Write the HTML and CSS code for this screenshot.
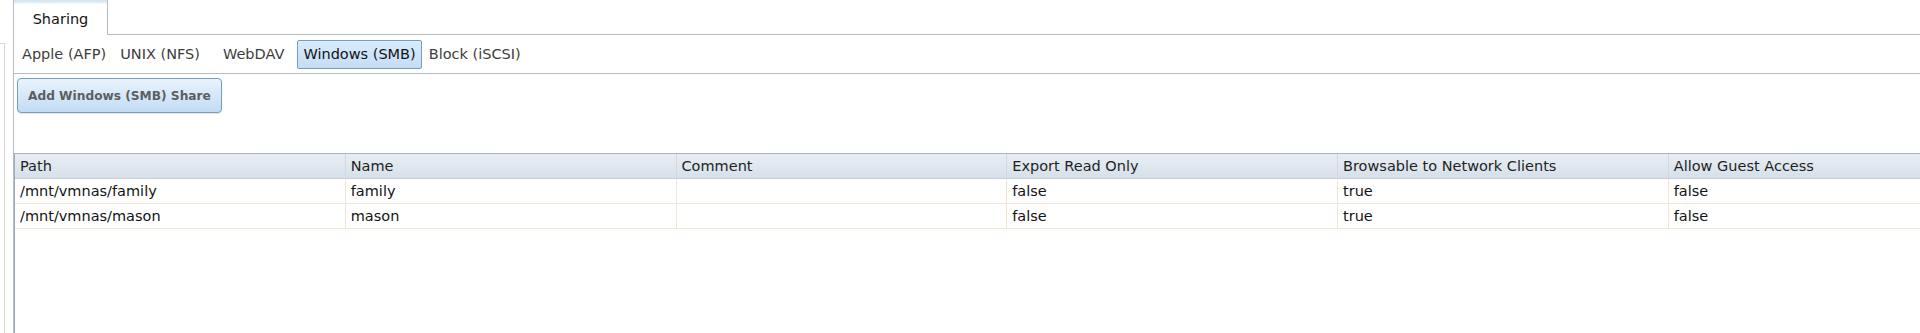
FILE: index.html
```html
<!DOCTYPE html>
<html lang="en">
<head>
  <meta charset="UTF-8">
  <title>Sharing</title>
  <link rel="stylesheet" href="styles.css">
</head>
<body>
  <div class="layout">
    <!-- collapsed side panel -->
    <div class="side"></div>

    <div class="main">
      <div class="tabbar">
        <div class="tab active">Sharing</div>
      </div>

      <div class="pane">
        <div class="subtabs">
          <span class="subtab">Apple (AFP)</span>
          <span class="subtab">UNIX (NFS)</span>
          <span class="subtab webdav">WebDAV</span>
          <span class="subtab selected">Windows (SMB)</span>
          <span class="subtab">Block (iSCSI)</span>
        </div>

        <div class="actions">
          <button class="add-btn">Add Windows (SMB) Share</button>
        </div>

        <div class="grid">
          <div class="grid-row grid-header">
            <div class="cell">Path</div>
            <div class="cell">Name</div>
            <div class="cell">Comment</div>
            <div class="cell">Export Read Only</div>
            <div class="cell">Browsable to Network Clients</div>
            <div class="cell">Allow Guest Access</div>
          </div>
          <div class="grid-row">
            <div class="cell">/mnt/vmnas/family</div>
            <div class="cell">family</div>
            <div class="cell"></div>
            <div class="cell">false</div>
            <div class="cell">true</div>
            <div class="cell">false</div>
          </div>
          <div class="grid-row">
            <div class="cell">/mnt/vmnas/mason</div>
            <div class="cell">mason</div>
            <div class="cell"></div>
            <div class="cell">false</div>
            <div class="cell">true</div>
            <div class="cell">false</div>
          </div>
        </div>
      </div>
    </div>
  </div>
</body>
</html>
```

FILE: styles.css
```css
body {
  margin: 0;
  background-color: #ffffff;
  color: #131313;
  font-family: "DejaVu Sans", Verdana, sans-serif;
  font-size: 14.5px;
  overflow: hidden;
}

.layout {
  display: flex;
  height: 333px;
}

.side {
  width: 4px;
  margin-top: 43px;
  border-top: 1px solid #d6d6d6;
  border-right: 1px solid #d6d6d6;
  flex: none;
}

.main {
  margin-left: 8px;
  flex: none;
  width: 2000px;
  display: flex;
  flex-direction: column;
}

/* top tab strip */
.tabbar {
  height: 34px;
  border-bottom: 1px solid #b5bcc7;
  display: flex;
}

.tab {
  width: 95px;
  height: 35px;
  box-sizing: border-box;
  border-left: 1px solid #b5bcc7;
  border-right: 1px solid #b5bcc7;
  text-align: center;
  line-height: 39px;
  color: #131313;
}

.tab.active {
  background: linear-gradient(#cfe2f5 0px, #e6f0fa 3px, #ffffff 4px);
}

.pane {
  flex: 1;
  border-left: 1px solid #b5bcc7;
  display: flex;
  flex-direction: column;
}

/* sub tabs */
.subtabs {
  height: 38px;
  border-bottom: 1px solid #b5bcc7;
  display: flex;
  align-items: center;
  padding-left: 1px;
}

.subtab {
  padding: 0 6px;
  height: 27px;
  line-height: 27px;
  border: 1px solid transparent;
  border-radius: 2px;
  color: #3d3d3d;
}

.subtab.webdav {
  margin-left: 9px;
}

.subtab.selected {
  margin-left: 6px;
  padding: 0 5px;
  color: #131313;
  border-color: #759dc0;
  background: linear-gradient(#d9ebfc, #c4ddf6);
}

/* action button */
.actions {
  height: 79px;
  padding: 4px 3px;
  box-sizing: border-box;
}

.add-btn {
  font-family: "DejaVu Sans", Verdana, sans-serif;
  font-size: 12.2px;
  font-weight: bold;
  color: #5e5e5e;
  height: 35px;
  padding: 0 10px;
  border: 1px solid #759dc0;
  border-radius: 4px;
  background: linear-gradient(#eaf3fc, #c2dcf5);
  box-shadow: 0 1px 1px rgba(0, 0, 0, 0.12);
}

/* data grid */
.grid {
  flex: 1;
  border-left: 1px solid #9faabb;
  border-top: 1px solid #a9b3c1;
}

.grid-row {
  display: flex;
  height: 24px;
  border-bottom: 1px solid #f3e5d6;
}

.grid-header {
  background: linear-gradient(#e9eef4, #d6e0ea);
  border-bottom: 1px solid #c6cfdb;
}

.cell {
  width: 330.75px;
  flex: none;
  border-right: 1px solid #f3e5d6;
  padding-left: 5px;
  box-sizing: border-box;
  line-height: 24px;
  white-space: nowrap;
  color: #131313;
}

.grid-header .cell {
  border-right-color: #d2d8e0;
  color: #1f1f1f;
}
```
